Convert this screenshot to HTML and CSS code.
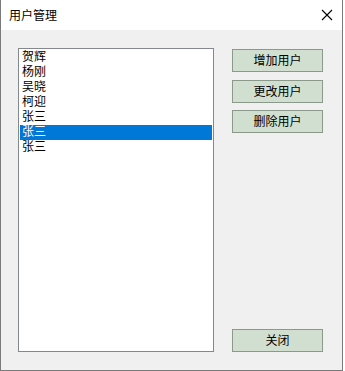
FILE: index.html
```html
<!DOCTYPE html>
<html>
<head>
<meta charset="utf-8">
<link rel="stylesheet" href="styles.css">
</head>
<body>
<div class="window">
  <div class="titlebar">
    <span class="title">用户管理</span>
    <svg class="close-x" width="12" height="12" viewBox="0 0 12 12"><path d="M1 1 L11 11 M11 1 L1 11" stroke="#000" stroke-width="1.1" fill="none"/></svg>
  </div>
  <div class="content">
    <div class="listbox">
      <div class="item">贺辉</div>
      <div class="item">杨刚</div>
      <div class="item">吴晓</div>
      <div class="item">柯迎</div>
      <div class="item">张三</div>
      <div class="item selected">张三</div>
      <div class="item">张三</div>
    </div>
    <div class="buttons">
      <button class="btn">增加用户</button>
      <button class="btn btn-2">更改用户</button>
      <button class="btn btn-3">删除用户</button>
      <button class="btn btn-close">关闭</button>
    </div>
  </div>
</div>
</body>
</html>
```
FILE: styles.css
```css
html, body {
  margin: 0;
  padding: 0;
  background: #ffffff;
}
body {
  font-family: "Liberation Sans", "Noto Sans CJK SC", sans-serif;
  font-size: 12px;
  color: #000;
}
.window {
  width: 341px;
  height: 370px;
  border-left: 1px solid #7a7a7a;
  border-right: 1px solid #7a7a7a;
  border-bottom: 1px solid #7a7a7a;
  background: #f0f0f0;
  display: flex;
  flex-direction: column;
}
.titlebar {
  height: 30px;
  background: #ffffff;
  display: flex;
  align-items: center;
  justify-content: space-between;
  padding: 0 9px 0 8px;
  flex: none;
}
.title {
  font-size: 12px;
  line-height: 14px;
  margin-top: 1px;
}
.close-x {
  display: block;
}
.content {
  flex: 1;
  display: flex;
  padding: 18px 18px 18px 17px;
}
.listbox {
  width: 192px;
  height: 300px;
  border: 1px solid #828790;
  background: #ffffff;
  padding: 1px;
}
.item {
  height: 15px;
  line-height: 15px;
  padding-left: 2px;
  white-space: nowrap;
}
.item.selected {
  background: #0078d7;
  color: #ffffff;
}
.buttons {
  display: flex;
  flex-direction: column;
  margin-left: 18px;
  width: 91px;
}
.btn {
  width: 91px;
  height: 23px;
  margin: 0;
  padding: 0;
  background: #d1dfd1;
  border: 1px solid #8b998b;
  font-family: "Liberation Sans", "Noto Sans CJK SC", sans-serif;
  font-size: 12px;
  line-height: 20px;
  color: #000;
}
.btn:first-child {
  margin-top: 1px;
}
.btn-2 {
  margin-top: 8px;
}
.btn-3 {
  margin-top: 7px;
}
.btn-close {
  margin-top: auto;
}
```
